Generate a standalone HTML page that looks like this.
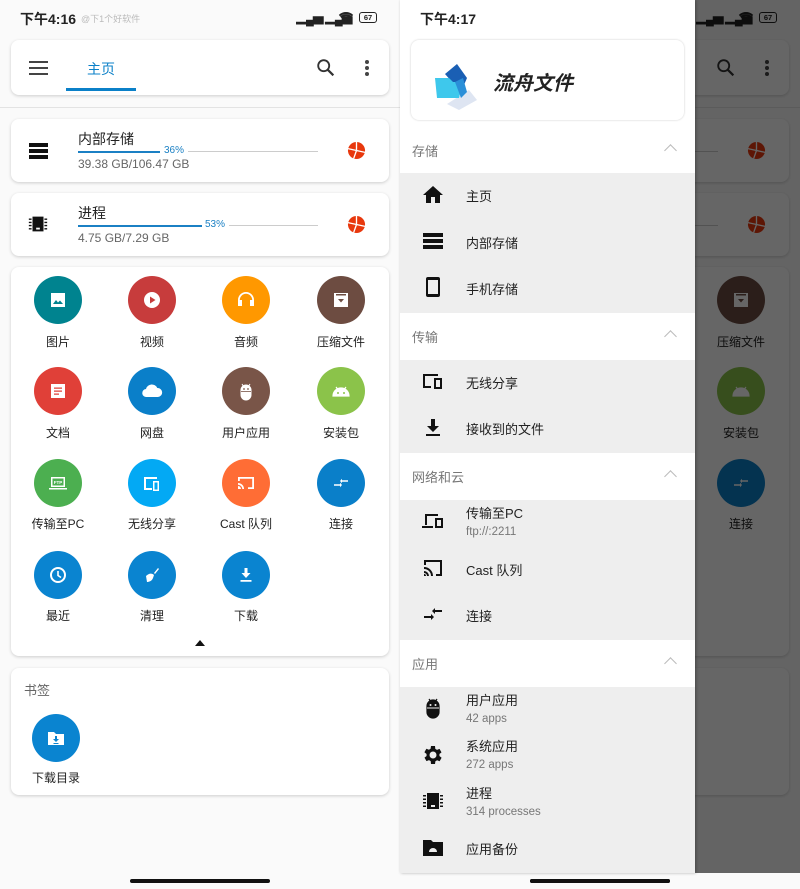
<!DOCTYPE html>
<html><head><meta charset="utf-8"><style>
*{margin:0;padding:0;box-sizing:border-box}
body{width:800px;height:889px;position:relative;overflow:hidden;background:#fff;font-family:"Liberation Sans","Noto Sans CJK SC",sans-serif;color:#222}
.a{position:absolute}
.scr{position:absolute;top:0;width:400px;height:889px;background:#fafafa;overflow:hidden}
.card{position:absolute;background:#fff;border-radius:8px;box-shadow:0 1px 3px rgba(0,0,0,.18)}
.c{position:absolute;width:48px;height:48px;border-radius:50%;display:flex;align-items:center;justify-content:center}
.c svg{width:24px;height:24px;fill:#fff}
.lb{position:absolute;width:94px;text-align:center;font-size:12px;color:#222}
.t{white-space:nowrap}
.gr{position:absolute;left:0;width:295px;background:#eeeeee}
.hd{position:absolute;left:12px;font-size:13px;color:#777}
.chev{position:absolute;left:666px;width:9px;height:9px;border-left:1.5px solid #bbb;border-top:1.5px solid #bbb;transform:rotate(45deg)}
.it{position:absolute;left:66px;font-size:13px;color:#222;white-space:nowrap}
.sub{font-size:11.5px;color:#777}
.ic{position:absolute;left:21px;width:24px;height:24px;fill:#111}
</style></head><body>

<div class="scr" style="left:0">
<div class="a t" style="left:20px;top:9px;font-size:14px;font-weight:bold;color:#222">下午4:16</div>
<div class="a t" style="left:81px;top:12px;font-size:9px;color:#bbb">@下1个好软件</div>
<div class="a t" style="left:296px;top:11px;font-size:11px;font-weight:bold;letter-spacing:-1px">▂▄▆ ▂▄▆</div>
<svg class="a" style="left:338px;top:11px" width="16" height="13" viewBox="0 0 24 20"><path d="M12 18l3-3.5a4.5 4.5 0 0 0-6 0zM5 11a10 10 0 0 1 14 0l2-2.5A13 13 0 0 0 3 8.5zM1 6a16 16 0 0 1 22 0l-1.8 2.2a13.5 13.5 0 0 0-18.4 0z" fill="#222"/></svg>
<div class="a" style="left:359px;top:12px;width:18px;height:11px;border:1.3px solid #222;border-radius:3px;font-size:7.5px;line-height:9px;text-align:center;font-weight:bold">67</div>

<div class="card" style="left:11px;top:40px;width:378px;height:55px"></div>
<div class="a" style="left:29px;top:61px;width:19px;height:2px;background:#444;box-shadow:0 6px 0 #444,0 12px 0 #444"></div>
<div class="a t" style="left:87px;top:59px;font-size:14px;color:#0b80c8">主页</div>
<div class="a" style="left:66px;top:88px;width:70px;height:3px;background:#0b80c8"></div>
<svg class="a" style="left:315px;top:57px" width="22" height="22" viewBox="0 0 24 24"><circle cx="9.5" cy="9.5" r="6" fill="none" stroke="#333" stroke-width="2"/><path d="M14 14l6 6" stroke="#333" stroke-width="2.4"/></svg>
<div class="a" style="left:365px;top:60px;width:4px;height:4px;border-radius:50%;background:#444;box-shadow:0 6px 0 #444,0 12px 0 #444"></div>
<div class="a" style="left:0;top:107px;width:400px;height:1px;background:#e3e3e3"></div>

<div class="card" style="left:11px;top:119px;width:378px;height:63px"></div>
<div class="a" style="left:29px;top:143px;width:19px;height:4px;background:#111;box-shadow:0 6px 0 #111,0 12px 0 #111"></div>
<div class="a t" style="left:78px;top:129px;font-size:14px">内部存储</div>
<div class="a" style="left:78px;top:151px;width:82px;height:2px;background:#1b80c4"></div>
<div class="a t" style="left:164px;top:145px;font-size:10px;color:#1b80c4">36%</div>
<div class="a" style="left:188px;top:151px;width:130px;height:1px;background:#ccc"></div>
<div class="a t" style="left:78px;top:157px;font-size:12px;color:#666">39.38 GB/106.47 GB</div>
<svg class="a" style="left:347px;top:141px" width="19" height="19" viewBox="0 0 20 20"><circle cx="10" cy="10" r="9" fill="#e8380d"/><path d="M10 10V0.5M10 10L1 8M10 10l-3 8.5M10 10l9 2" stroke="#fff" stroke-width="1.4"/></svg>

<div class="card" style="left:11px;top:193px;width:378px;height:63px"></div>
<svg class="a" style="left:27px;top:213px" width="22" height="22" viewBox="0 0 24 24" fill="#111"><path d="M6 4h12v16H6zM2 6h3v1.5H2zM2 9.5h3V11H2zM2 13h3v1.5H2zM2 16.5h3V18H2zM19 6h3v1.5h-3zM19 9.5h3V11h-3zM19 13h3v1.5h-3zM19 16.5h3V18h-3z"/><path d="M10 16h4v2h-4z" fill="#fff"/></svg>
<div class="a t" style="left:78px;top:203px;font-size:14px">进程</div>
<div class="a" style="left:78px;top:225px;width:124px;height:2px;background:#1b80c4"></div>
<div class="a t" style="left:205px;top:219px;font-size:10px;color:#1b80c4">53%</div>
<div class="a" style="left:229px;top:225px;width:89px;height:1px;background:#ccc"></div>
<div class="a t" style="left:78px;top:231px;font-size:12px;color:#666">4.75 GB/7.29 GB</div>
<svg class="a" style="left:347px;top:215px" width="19" height="19" viewBox="0 0 20 20"><circle cx="10" cy="10" r="9" fill="#e8380d"/><path d="M10 10V0.5M10 10L1 8M10 10l-3 8.5M10 10l9 2" stroke="#fff" stroke-width="1.4"/></svg>

<div class="card" style="left:11px;top:267px;width:378px;height:389px"></div>
<div class="c" style="left:34px;top:276px;background:#00838f"><svg viewBox="0 0 24 24"><path d="M5 5h14v14H5z"/><path d="M7 16l3-4 2 2.5 2-2 3 3.5z" fill="#00838f"/></svg></div>
<div class="c" style="left:128px;top:276px;background:#c73c3c"><svg viewBox="0 0 24 24"><circle cx="12" cy="12" r="8"/><path d="M10 8.5v7l5.5-3.5z" fill="#c73c3c"/></svg></div>
<div class="c" style="left:222px;top:276px;background:#ff9800"><svg viewBox="0 0 24 24"><path d="M4 18v-6a8 8 0 0 1 16 0v6h-4v-6h2.2a6.2 6.2 0 0 0-12.4 0H8v6z"/></svg></div>
<div class="c" style="left:317px;top:276px;background:#6d4c41"><svg viewBox="0 0 24 24"><path d="M5 5h14v14H5z"/><path d="M7 6h10v1.5H7zM9 11h6l-3 3.5z" fill="#6d4c41"/></svg></div>
<div class="lb t" style="left:11px;top:333px">图片</div><div class="lb t" style="left:105px;top:333px">视频</div><div class="lb t" style="left:199px;top:333px">音频</div><div class="lb t" style="left:294px;top:333px">压缩文件</div>
<div class="c" style="left:34px;top:367px;background:#e04038"><svg viewBox="0 0 24 24"><path d="M5 5h14v14H5z"/><path d="M8 8.5h8v1.3H8zM8 11.5h8v1.3H8zM8 14.5h5v1.3H8z" fill="#e04038"/></svg></div>
<div class="c" style="left:128px;top:367px;background:#0a7fc9"><svg viewBox="0 0 24 24"><path d="M6.5 18a4 4 0 0 1-.5-8 6 6 0 0 1 11.3-1A4.5 4.5 0 0 1 18 18z"/></svg></div>
<div class="c" style="left:222px;top:367px;background:#795548"><svg viewBox="0 0 24 24"><path d="M7 11a5 5 0 0 1 10 0v5a5 5 0 0 1-10 0zM8 5l1.5 2.5M16 5l-1.5 2.5" stroke="#fff" stroke-width="1"/><circle cx="10" cy="10" r=".9" fill="#795548"/><circle cx="14" cy="10" r=".9" fill="#795548"/><path d="M7 12.5h10" stroke="#795548" stroke-width=".8"/></svg></div>
<div class="c" style="left:317px;top:367px;background:#8bc34a"><svg viewBox="0 0 24 24"><path d="M4 17a8 8 0 0 1 16 0zM7 8l2 2.5M17 8l-2 2.5" stroke="#fff" stroke-width="1.2"/><circle cx="9" cy="14" r="1" fill="#8bc34a"/><circle cx="15" cy="14" r="1" fill="#8bc34a"/></svg></div>
<div class="lb t" style="left:11px;top:424px">文档</div><div class="lb t" style="left:105px;top:424px">网盘</div><div class="lb t" style="left:199px;top:424px">用户应用</div><div class="lb t" style="left:294px;top:424px">安装包</div>
<div class="c" style="left:34px;top:459px;background:#4caf50"><svg viewBox="0 0 24 24"><path d="M5 6h14v10H5zM3 17h18v1.5H3z"/><path d="M6.5 7.5h11v7h-11z" fill="#4caf50"/><text x="12" y="13" font-size="4.5" text-anchor="middle" fill="#fff" font-family="Liberation Sans" font-weight="bold">FTP</text></svg></div>
<div class="c" style="left:128px;top:459px;background:#03a9f4"><svg viewBox="0 0 24 24"><path d="M4 6h13v2H6v9H4zM13 10h6v10h-6z"/><path d="M14.5 11.5h3v7h-3z" fill="#03a9f4"/><path d="M4 17h8v2H4z"/></svg></div>
<div class="c" style="left:222px;top:459px;background:#ff6d35"><svg viewBox="0 0 24 24"><path d="M4 6h16v12h-6v-1.8h4.2V7.8H5.8V10H4zM4 12a6 6 0 0 1 6 6H8.3A4.3 4.3 0 0 0 4 13.7zM4 15a3 3 0 0 1 3 3H4z"/></svg></div>
<div class="c" style="left:317px;top:459px;background:#0a7fc9"><svg viewBox="0 0 24 24"><path d="M5 13.2h6v-1.5l2 2.3-2 2.3v-1.5H5zM19 10.8h-6v1.5l-2-2.3 2-2.3v1.5h6z"/></svg></div>
<div class="lb t" style="left:11px;top:515px">传输至PC</div><div class="lb t" style="left:105px;top:515px">无线分享</div><div class="lb t" style="left:199px;top:515px">Cast 队列</div><div class="lb t" style="left:294px;top:515px">连接</div>
<div class="c" style="left:34px;top:551px;background:#0a84d0"><svg viewBox="0 0 24 24"><circle cx="12" cy="12" r="7" fill="none" stroke="#fff" stroke-width="2"/><path d="M12 8v4.5l3 2" stroke="#fff" stroke-width="1.6" fill="none"/></svg></div>
<div class="c" style="left:128px;top:551px;background:#0a84d0"><svg viewBox="0 0 24 24"><path d="M14 10l4-5 1 1-4 5zM6 13c3-3 6-3 8-1l-1 3c-1 3-4 4-6 4z"/></svg></div>
<div class="c" style="left:222px;top:551px;background:#0a84d0"><svg viewBox="0 0 24 24"><path d="M10.5 5h3v5h3l-4.5 5-4.5-5h3zM6.5 17h11v1.8h-11z"/></svg></div>
<div class="lb t" style="left:11px;top:607px">最近</div><div class="lb t" style="left:105px;top:607px">清理</div><div class="lb t" style="left:199px;top:607px">下载</div>
<div class="a" style="left:195px;top:640px;width:0;height:0;border-left:5px solid transparent;border-right:5px solid transparent;border-bottom:6px solid #111"></div>

<div class="card" style="left:11px;top:668px;width:378px;height:127px"></div>
<div class="a t" style="left:24px;top:680px;font-size:13px;color:#666">书签</div>
<div class="c" style="left:32px;top:714px;background:#0a84d0"><svg viewBox="0 0 24 24"><path d="M4 6h6l2 2h8v11H4z"/><path d="M11 10h2v3h2l-3 3-3-3h2zM9.5 17h5v1h-5z" fill="#0a84d0"/></svg></div>
<div class="lb t" style="left:9px;top:769px">下载目录</div>
<div class="a" style="left:130px;top:879px;width:140px;height:4px;border-radius:2px;background:#111"></div>
</div>

<div class="scr" style="left:400px">
<div class="a" style="left:296px;top:11px;font-size:11px;font-weight:bold;letter-spacing:-1px">▂▄▆ ▂▄▆</div>
<svg class="a" style="left:338px;top:11px" width="16" height="13" viewBox="0 0 24 20"><path d="M12 18l3-3.5a4.5 4.5 0 0 0-6 0zM5 11a10 10 0 0 1 14 0l2-2.5A13 13 0 0 0 3 8.5zM1 6a16 16 0 0 1 22 0l-1.8 2.2a13.5 13.5 0 0 0-18.4 0z" fill="#222"/></svg>
<div class="a" style="left:359px;top:12px;width:18px;height:11px;border:1.3px solid #222;border-radius:3px;font-size:7.5px;line-height:9px;text-align:center;font-weight:bold">67</div>
<div class="card" style="left:11px;top:40px;width:378px;height:55px"></div>
<svg class="a" style="left:315px;top:57px" width="22" height="22" viewBox="0 0 24 24"><circle cx="9.5" cy="9.5" r="6" fill="none" stroke="#333" stroke-width="2"/><path d="M14 14l6 6" stroke="#333" stroke-width="2.4"/></svg>
<div class="a" style="left:365px;top:60px;width:4px;height:4px;border-radius:50%;background:#444;box-shadow:0 6px 0 #444,0 12px 0 #444"></div>
<div class="a" style="left:0;top:107px;width:400px;height:1px;background:#e3e3e3"></div>
<div class="card" style="left:11px;top:119px;width:378px;height:63px"></div>
<div class="a" style="left:188px;top:151px;width:130px;height:1px;background:#ccc"></div>
<svg class="a" style="left:347px;top:141px" width="19" height="19" viewBox="0 0 20 20"><circle cx="10" cy="10" r="9" fill="#e8380d"/><path d="M10 10V0.5M10 10L1 8M10 10l-3 8.5M10 10l9 2" stroke="#fff" stroke-width="1.4"/></svg>
<div class="card" style="left:11px;top:193px;width:378px;height:63px"></div>
<div class="a" style="left:229px;top:225px;width:89px;height:1px;background:#ccc"></div>
<svg class="a" style="left:347px;top:215px" width="19" height="19" viewBox="0 0 20 20"><circle cx="10" cy="10" r="9" fill="#e8380d"/><path d="M10 10V0.5M10 10L1 8M10 10l-3 8.5M10 10l9 2" stroke="#fff" stroke-width="1.4"/></svg>
<div class="card" style="left:11px;top:267px;width:378px;height:389px"></div>
<div class="c" style="left:317px;top:276px;background:#6d4c41"><svg viewBox="0 0 24 24"><path d="M5 5h14v14H5z"/><path d="M7 6h10v1.5H7zM9 11h6l-3 3.5z" fill="#6d4c41"/></svg></div>
<div class="lb t" style="left:294px;top:333px">压缩文件</div>
<div class="c" style="left:317px;top:367px;background:#8bc34a"><svg viewBox="0 0 24 24"><path d="M4 17a8 8 0 0 1 16 0zM7 8l2 2.5M17 8l-2 2.5" stroke="#fff" stroke-width="1.2"/></svg></div>
<div class="lb t" style="left:294px;top:424px">安装包</div>
<div class="c" style="left:317px;top:459px;background:#0a7fc9"><svg viewBox="0 0 24 24"><path d="M5 13.2h6v-1.5l2 2.3-2 2.3v-1.5H5zM19 10.8h-6v1.5l-2-2.3 2-2.3v1.5h6z"/></svg></div>
<div class="lb t" style="left:294px;top:515px">连接</div>
<div class="card" style="left:11px;top:668px;width:378px;height:127px"></div>
<div class="a" style="left:0;top:0;width:400px;height:873px;background:rgba(0,0,0,.6)"></div>
<div class="a" style="left:130px;top:879px;width:140px;height:4px;border-radius:2px;background:#111"></div>
</div>

<div class="a" style="left:400px;top:0;width:295px;height:873px;background:#fff;box-shadow:1px 0 3px rgba(0,0,0,.3);overflow:hidden">
<div class="a t" style="left:20px;top:9px;font-size:14px;font-weight:bold">下午4:17</div>
<div class="card" style="left:11px;top:40px;width:273px;height:80px;box-shadow:0 0 2px rgba(0,0,0,.2)"></div>
<svg class="a" style="left:33px;top:60px" width="48" height="50" viewBox="0 0 48 50"><path d="M14 44L36 30 44 40 26 50z" fill="#c8d4ea" opacity=".6"/><path d="M12 14L24 4 34 18 28 32z" fill="#1a5fb4"/><path d="M2 18h14l4 4h10l-4 16H4z" fill="#3ec8ec"/><path d="M22 22l8-4 4 14-6 6z" fill="#2a8fd8"/></svg>
<div class="a t" style="left:93px;top:67px;font-size:20px;font-style:italic;font-weight:bold">流舟文件</div>

<div class="hd t" style="top:141px">存储</div>
<div class="gr" style="top:173px;height:140px"></div>
<svg class="ic" style="top:183px" viewBox="0 0 24 24"><path d="M10 20v-6h4v6h5v-8h3L12 3 2 12h3v8z"/></svg>
<div class="it" style="top:186px">主页</div>
<div class="a" style="left:23px;top:233px;width:20px;height:4px;background:#111;box-shadow:0 6px 0 #111,0 12px 0 #111"></div>
<div class="it" style="top:233px">内部存储</div>
<svg class="ic" style="top:275px" viewBox="0 0 24 24"><path d="M7 2h10a2 2 0 0 1 2 2v16a2 2 0 0 1-2 2H7a2 2 0 0 1-2-2V4a2 2 0 0 1 2-2zm0 3v14h10V5z"/></svg>
<div class="it" style="top:279px">手机存储</div>

<div class="hd t" style="top:327px">传输</div>
<div class="gr" style="top:360px;height:93px"></div>
<svg class="ic" style="top:369px" viewBox="0 0 24 24"><path d="M2 5h15v2H4v10h6v2H2zM13 9h8v11h-8zm2 2v7h4v-7z"/></svg>
<div class="it" style="top:373px">无线分享</div>
<svg class="ic" style="top:416px" viewBox="0 0 24 24"><path d="M10 3h4v7h4l-6 6-6-6h4zM5 18h14v2H5z"/></svg>
<div class="it" style="top:419px">接收到的文件</div>

<div class="hd t" style="top:467px">网络和云</div>
<div class="gr" style="top:500px;height:140px"></div>
<svg class="ic" style="top:509px" viewBox="0 0 24 24"><path d="M4 5h13v2H6v9H4zM1 17h11v2H1zM14 9h8v10h-8zm2 2v6h4v-6z"/></svg>
<div class="it" style="top:505px;line-height:17px">传输至PC<br><span class="sub">ftp://:2211</span></div>
<svg class="ic" style="top:556px" viewBox="0 0 24 24"><path d="M3 4h18v16h-6v-2h4V6H5v3H3zM3 11a9 9 0 0 1 9 9h-2a7 7 0 0 0-7-7zM3 15a5 5 0 0 1 5 5H6a3 3 0 0 0-3-3zM3 18a2 2 0 0 1 2 2H3z"/></svg>
<div class="it" style="top:560px">Cast 队列</div>
<svg class="ic" style="top:602px" viewBox="0 0 24 24"><path d="M3 14h7v-2l3 3-3 3v-2H3zM21 10h-7v2l-3-3 3-3v2h7z"/></svg>
<div class="it" style="top:606px">连接</div>

<div class="hd t" style="top:654px">应用</div>
<div class="gr" style="top:687px;height:186px"></div>
<svg class="ic" style="top:696px" viewBox="0 0 24 24"><path d="M6 10a6 6 0 0 1 12 0v6a6 6 0 0 1-12 0zM8 3l2 3M16 3l-2 3" stroke="#111" stroke-width="1.2"/><path d="M6 12h12" stroke="#eee" stroke-width="1"/><circle cx="9.5" cy="9" r="1" fill="#eee"/><circle cx="14.5" cy="9" r="1" fill="#eee"/></svg>
<div class="it" style="top:692px;line-height:17px">用户应用<br><span class="sub">42 apps</span></div>
<svg class="ic" style="top:743px" viewBox="0 0 24 24"><path d="M19.4 13a7.5 7.5 0 0 0 0-2l2.1-1.6-2-3.5-2.5 1a7 7 0 0 0-1.7-1L15 3h-4l-.4 2.7a7 7 0 0 0-1.7 1l-2.5-1-2 3.5L6.6 11a7.5 7.5 0 0 0 0 2l-2.1 1.6 2 3.5 2.5-1a7 7 0 0 0 1.7 1L11 21h4l.4-2.7a7 7 0 0 0 1.7-1l2.5 1 2-3.5zM13 15.5a3.5 3.5 0 1 1 0-7 3.5 3.5 0 0 1 0 7z" transform="translate(-1 0)"/></svg>
<div class="it" style="top:738px;line-height:17px">系统应用<br><span class="sub">272 apps</span></div>
<svg class="ic" style="top:789px" viewBox="0 0 24 24"><path d="M6 4h12v16H6zM2 6h3v1.5H2zM2 9.5h3V11H2zM2 13h3v1.5H2zM2 16.5h3V18H2zM19 6h3v1.5h-3zM19 9.5h3V11h-3zM19 13h3v1.5h-3zM19 16.5h3V18h-3z"/><path d="M10 16h4v2h-4z" fill="#eee"/></svg>
<div class="it" style="top:785px;line-height:17px">进程<br><span class="sub">314 processes</span></div>
<svg class="ic" style="top:836px" viewBox="0 0 24 24"><path d="M2 4h8l2 2h10v14H2z"/><path d="M8 16a4 4 0 0 1 8 0z" fill="#eee"/></svg>
<div class="it" style="top:839px">应用备份</div>
</div>
<div class="chev" style="top:146px"></div>
<div class="chev" style="top:332px"></div>
<div class="chev" style="top:472px"></div>
<div class="chev" style="top:659px"></div>
<div class="a" style="left:530px;top:879px;width:140px;height:4px;border-radius:2px;background:#111"></div>
</body></html>
